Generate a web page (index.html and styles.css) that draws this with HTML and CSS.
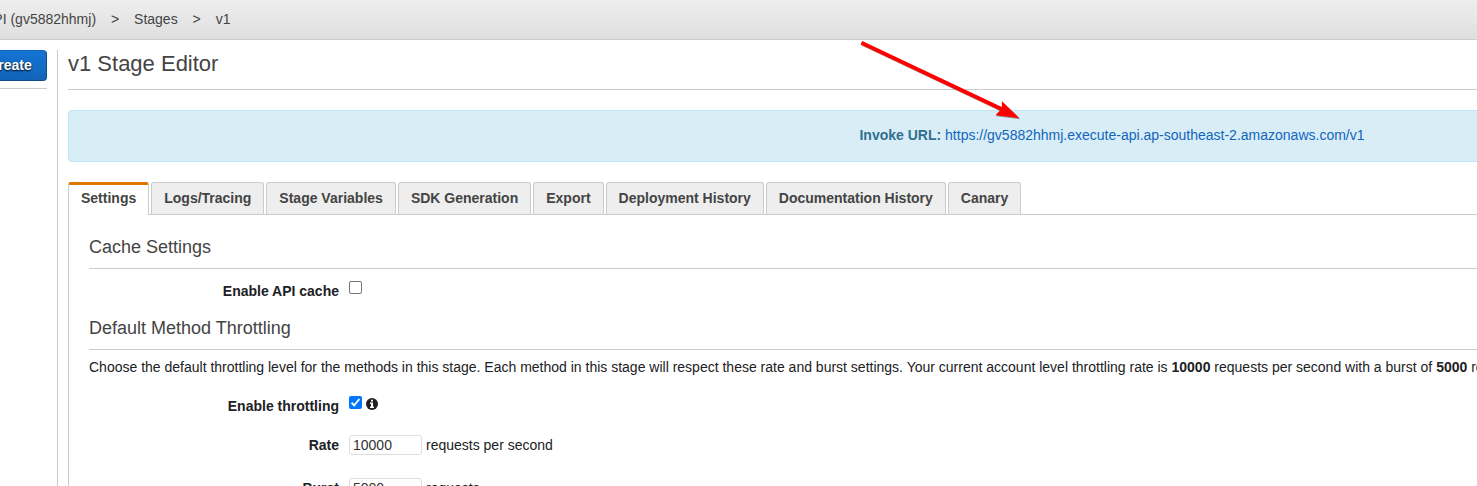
FILE: index.html
```html
<!DOCTYPE html>
<html lang="en">
<head>
<meta charset="utf-8">
<title>v1 Stage Editor</title>
<link rel="stylesheet" href="styles.css">
</head>
<body>
<header class="crumbs">
  <span class="crumb-api">API (gv5882hhmj)</span><span class="sep">&gt;</span><span>Stages</span><span class="sep">&gt;</span><span>v1</span>
</header>
<div class="layout">
  <aside class="sidebar"><div class="side-head"><button class="create">Create</button></div></aside>
  <main class="main">
    <h1>v1 Stage Editor</h1>
    <div class="invoke"><p><strong>Invoke URL:</strong> <a class="url">https://gv5882hhmj.execute-api.ap-southeast-2.amazonaws.com/v1</a></p></div>
    <nav class="tabs">
      <a class="tab active">Settings</a>
      <a class="tab">Logs/Tracing</a>
      <a class="tab">Stage Variables</a>
      <a class="tab">SDK Generation</a>
      <a class="tab">Export</a>
      <a class="tab">Deployment History</a>
      <a class="tab">Documentation History</a>
      <a class="tab">Canary</a>
    </nav>
    <section class="panel">
      <h2>Cache Settings</h2>
      <div class="row cache"><span class="label">Enable API cache</span><span class="check"></span></div>
      <h2>Default Method Throttling</h2>
      <p class="desc">Choose the default throttling level for the methods in this stage. Each method in this stage will respect these rate and burst settings. Your current account level throttling rate is <b>10000</b> requests per second with a burst of <b>5000</b> requests.</p>
      <div class="row throttle"><span class="label">Enable throttling</span><span class="check on"><svg width="13" height="13" viewBox="0 0 13 13"><path d="M2.6 6.8 5.2 9.3 10.4 3" fill="none" stroke="#fff" stroke-width="1.9"/></svg></span>
        <svg class="info" width="12" height="12" viewBox="0 0 12 12"><circle cx="6" cy="6" r="6" fill="#202124"/><path d="M5 1.7h2v1.8H5zM4 4.500H7v4h1V10H4V8.500H5V6H4z" fill="#fff"/></svg></div>
      <div class="row rate"><span class="label">Rate</span><input class="field" value="10000"><span class="unit">requests per second</span></div>
      <div class="row burst"><span class="label">Burst</span><input class="field" value="5000"><span class="unit">requests</span></div>
    </section>
  </main>
</div>
<svg class="arrow" width="170" height="90" viewBox="0 0 170 90">
  <path d="M6.200 4 4.600 7.600 144 73.500 139.500 78.300 163.500 81.300 146 64.200 145.800 70Z" transform="translate(.8 1)" fill="#555" opacity=".55"/>
  <path d="M6.200 4 4.600 7.600 144 73.500 139.500 78.300 163.500 81.300 146 64.200 145.800 70Z" fill="#f00"/>
</svg>
</body>
</html>
```
FILE: styles.css
```css
* { box-sizing: border-box; }
body { margin: 0; height: 486px; overflow: hidden; position: relative; background: #fff; color: #202124; font: 14px/20px "Liberation Sans", Arial, sans-serif; }
.crumbs { height: 40px; display: flex; align-items: flex-start; padding-top: 9px; background: linear-gradient(#eee, #dfdfdf); border-bottom: 1px solid #ccc; color: #444; white-space: nowrap; }
.crumb-api { margin-left: -16px; }
.sep { width: 38px; text-align: center; }
.layout { display: flex; padding-top: 10px; width: 2157px; }
.sidebar { width: 58px; height: 460px; border-right: 1px solid #ccc; flex: none; }
.side-head { width: 47px; height: 39px; border-bottom: 1px solid #ccc; display: flex; justify-content: flex-end; }
.create { flex: none; width: 74px; height: 31px; padding: 0 0 2px; border: 1px solid #0f4b8b; border-top-color: #1166bb; border-radius: 4px; background: linear-gradient(#1374d4, #1264b8); color: #fff; font: bold 14px/20px "Liberation Sans", Arial, sans-serif; text-shadow: 0 1px 2px #000; }
.main { flex: 1; padding-left: 10px; }
h1, h2 { font-weight: normal; color: #444; margin: 0; border-bottom: 1px solid #ccc; }
h1 { font-size: 22px; line-height: 28px; height: 40px; }
.invoke { margin-top: 20px; height: 52px; background: #d9edf7; border: 1px solid #bce8f1; border-radius: 4px; color: #31708f; text-align: center; padding: 14px 1px 0 0; }
.invoke p { margin: 0; }
.url { color: #1166bb; }
.tabs { display: flex; gap: 2px; margin-top: 20px; height: 33px; border-bottom: 1px solid #ccc; }
.tab { height: 32px; padding: 5px 12px 0; border: 1px solid #ccc; border-bottom: 0; border-radius: 3px 3px 0 0; background: #eee; color: #444; font-weight: bold; white-space: nowrap; }
.active { height: 33px; background: #fff; border-top: 3px solid #e07700; padding-top: 3px; }
.panel { border-left: 1px solid #ccc; padding: 20px 20px 0; height: 300px; }
h2 { font-size: 18px; line-height: 24px; height: 34px; }
.row { display: flex; align-items: flex-start; }
.label { width: 250px; text-align: right; font-weight: bold; margin-right: 10px; }
.cache { height: 47px; padding-top: 12px; }
.check { width: 13px; height: 13px; border: 1px solid #767676; border-radius: 2px; background: #fff; }
.on { border: 0; background: #0075ff; }
.check svg { display: block; }
.desc { margin: 7px 0 0; white-space: nowrap; }
.throttle { height: 58px; padding-top: 19px; }
.info { margin: 2px 0 0 4px; }
.rate { height: 43px; }
.field { width: 73px; height: 20px; border: 1px solid #ddd; border-radius: 3px; padding: 0 3px; font: inherit; color: #333; margin-right: 4px; }
.arrow { position: absolute; left: 856px; top: 37px; }
```
